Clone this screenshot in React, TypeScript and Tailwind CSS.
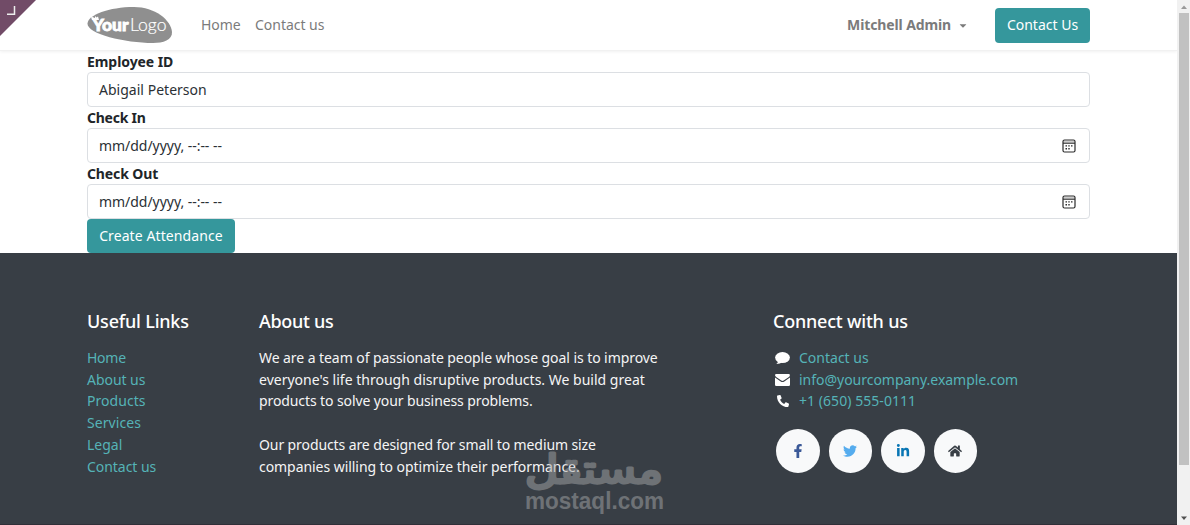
import { FaCaretDown, FaFacebookF, FaHome, FaLinkedinIn, FaPhone, FaTwitter } from "react-icons/fa";

const links: [string, string][] = [
  ["Home", "tracking-[-0.25px]"],
  ["About us", "tracking-[-0.05px]"],
  ["Products", "tracking-[0.05px]"],
  ["Services", "tracking-[0.07px]"],
  ["Legal", "tracking-[0px]"],
  ["Contact us", "tracking-[-0.05px]"],
];

function Logo() {
  return (
    <svg className="h-[38px] w-[86px]" viewBox="0 0 86 38">
      <path d="M0.500 17.500C1 9 22 1 47 1C68 1 84 14 85 26C85.500 34 76 37 66 37C38 37 0 28 0.500 17.500Z" fill="#8f8f8f" />
      <path d="M4 10.500L8 12V10L9.500 11.500L11 10.500L12 14H5Z" fill="#fff" />
      <text x="5.500" y="24.500" fill="#fff" stroke="#fff" strokeWidth="0.800" fontFamily="Lato" fontWeight="900" fontSize="17" textLength="36" lengthAdjust="spacingAndGlyphs">Your</text>
      <text x="43" y="24.500" fill="#fff" stroke="#fff" strokeWidth="0.200" fontFamily="Lato" fontWeight="300" fontSize="17" textLength="36.500" lengthAdjust="spacingAndGlyphs">Logo</text>
    </svg>
  );
}

function CalendarIcon() {
  return (
    <svg className="h-[14px] w-[14px]" viewBox="0 0 14 14" fill="none">
      <path d="M1.600 1.700H12.400V3.600H1.600Z" fill="#ccc" />
      <rect x="1" y="1" width="12" height="12" rx="1.500" stroke="#2b2b2b" strokeWidth="1.200" />
      <path d="M1 4.200H13" stroke="#2b2b2b" strokeWidth="1.100" />
      <path d="M3.500 6.900H5M6.300 6.900H7.700M9 6.900H10.500M3.500 9.700H5M6.300 9.700H7.700" stroke="#2b2b2b" strokeWidth="1.400" />
    </svg>
  );
}

function CommentIcon() {
  return (
    <svg className="mr-[9px] ml-[2px] h-[15px] w-[15px]" viewBox="0 0 15 15" fill="#fff">
      <ellipse cx="7.500" cy="7.600" rx="7.400" ry="5.500" />
      <path d="M3.300 10.500C3.300 12 2.300 13.200 1.300 14C4 14 6 13.300 7.500 11.500Z" />
    </svg>
  );
}

function EnvelopeIcon() {
  return (
    <svg className="mr-[9px] ml-[2px] h-[15px] w-[15px]" viewBox="0 0 15 15" fill="#fff">
      <path d="M1.300 2H13.700Q15 2 14.900 3.200Q14.700 4.500 13.500 5.300L8.700 8.600Q7.500 9.400 6.300 8.600L1.500 5.300Q0.200 4.400 0 3.200Q0 2 1.300 2Z" />
      <path d="M0 5.400L5.700 9.500Q7.500 10.600 9.300 9.500L15 5.400V12.700Q15 14 13.700 14H1.300Q0 14 0 12.700Z" />
    </svg>
  );
}

function Field({ label, value, date, tracking }: { label: string; value: string; date?: boolean; tracking: string }) {
  return (
    <div className="h-14">
      <div className="h-[21px] leading-[21px] font-bold text-[#212529]">
        <span className={tracking}>{label}</span>
      </div>
      <div className="flex h-[35px] items-center justify-between rounded-[4px] border border-[#dcdfe3] pr-[13px] pl-[11px] text-[#2b3035]">
        <span className={date ? "tracking-[-0.04px]" : "tracking-[0.02px]"}>{value}</span>
        {date && <CalendarIcon />}
      </div>
    </div>
  );
}

export default function App() {
  return (
    <div className="relative flex h-[525px] w-[1190px] overflow-hidden bg-white font-['Noto_Sans',sans-serif] text-[14px] leading-[21.700px] whitespace-nowrap">
      <div className="flex w-[1177px] flex-col">
        <header className="flex h-[51px] shrink-0 items-center border-b border-[#f1f1f1] pr-[87px] pl-[87px] text-[#7b7b7b] shadow-[0_1px_3px_rgba(0,0,0,0.06)]">
          <Logo />
          <span className="ml-[28px] w-[54px] tracking-[-0.050px]">Home</span>
          <span className="tracking-[-0.030px]">Contact us</span>
          <span className="ml-auto font-bold tracking-[-0.120px]">Mitchell Admin</span>
          <FaCaretDown className="mr-[27px] ml-[7px] h-[11px] w-[10px]" />
          <button className="h-[35px] w-[95px] rounded-[4px] bg-[#35979c] text-white">Contact Us</button>
        </header>
        <main className="h-[202px] shrink-0 px-[87px]">
          <Field label="Employee ID" value="Abigail Peterson" tracking="tracking-[-0.07px]" />
          <Field label="Check In" value="mm/dd/yyyy, --:-- --" date tracking="tracking-[-0.25px]" />
          <Field label="Check Out" value="mm/dd/yyyy, --:-- --" date tracking="tracking-[-0.12px]" />
          <button className="h-[34px] w-[148px] rounded-[4px] bg-[#35979c] tracking-[0.1px] text-white">Create Attendance</button>
        </main>
        <footer className="flex grow border-b border-[#302f38] bg-[#383e45] px-[87px] pt-[55px] text-[#f5f5f5]">
          <section className="w-[172px]">
            <h5 className="mb-[13px] h-[26px] text-[18px] leading-[26px] font-medium tracking-[-0.200px] text-white">Useful Links</h5>
            <ul className="text-[#55b3b7]">
              {links.map(([name, tracking]) => (
                <li key={name} className={tracking}>{name}</li>
              ))}
            </ul>
          </section>
          <section className="w-[514px]">
            <h5 className="mb-[13px] h-[26px] text-[18px] leading-[26px] font-medium tracking-[-0.300px] text-white">About us</h5>
            <p><span className="tracking-[-0.067px]">We are a team of passionate people whose goal is to improve</span><br />
              <span className="tracking-[0.010px]">everyone's life through disruptive products. We build great</span><br />
              <span className="tracking-[-0.100px]">products to solve your business problems.</span></p>
            <p className="mt-[21.700px]"><span className="tracking-[-0.100px]">Our products are designed for small to medium size</span><br />
              <span className="tracking-[-0.055px]">companies willing to optimize their performance.</span></p>
          </section>
          <section>
            <h5 className="mb-[13px] h-[26px] text-[18px] leading-[26px] font-medium tracking-[-0.220px] text-white">Connect with us</h5>
            <ul className="text-[#55b3b7]">
              <li className="flex items-center"><CommentIcon /><span className="tracking-[0px]">Contact us</span></li>
              <li className="flex items-center"><EnvelopeIcon /><span className="tracking-[-0.020px]">info@yourcompany.example.com</span></li>
              <li className="flex items-center"><FaPhone className="mr-[10px] ml-[4px] h-[12px] w-[12px] scale-x-[-1] text-white" /><span className="tracking-[0.050px]">+1 (650) 555-0111</span></li>
            </ul>
            <div className="mt-[17px] ml-[3px] flex gap-[9px]">
              <span className="flex size-[43.500px] items-center justify-center rounded-full bg-[#f8f9fa]"><FaFacebookF className="size-[14px] text-[#3b5998]" /></span>
              <span className="flex size-[43.500px] items-center justify-center rounded-full bg-[#f8f9fa]"><FaTwitter className="size-[14px] text-[#55acee]" /></span>
              <span className="flex size-[43.500px] items-center justify-center rounded-full bg-[#f8f9fa]"><FaLinkedinIn className="size-[14px] text-[#0976b4]" /></span>
              <span className="flex size-[43.500px] items-center justify-center rounded-full bg-[#f8f9fa]"><FaHome className="size-[14px] text-[#383e45]" /></span>
            </div>
          </section>
        </footer>
      </div>
      <aside className="flex w-[13px] flex-col items-center bg-[#f1f1f1]">
        <svg className="h-[13px] w-[10px]" viewBox="0 0 10 13"><path d="M2 9L5 5.500L8 9Z" fill="#999" /></svg>
        <div className="h-[452px] w-[10px] bg-[#c1c1c1]" />
        <svg className="mt-auto h-[13px] w-[10px]" viewBox="0 0 10 13"><path d="M2 4.500L5 8L8 4.500Z" fill="#505050" /></svg>
      </aside>
      <svg className="absolute top-0 left-0 h-[36px] w-[36px]" viewBox="0 0 36 36">
        <path d="M0 0H36L0 36Z" fill="#714b67" />
        <path d="M7 14.300H14.500V6" stroke="#eee" strokeWidth="1.500" fill="none" />
      </svg>
      <svg className="absolute top-[445px] left-[520px] h-[80px] w-[150px]" viewBox="0 0 150 80" fill="#a5a6a8" opacity="0.5">
        <text transform="translate(143 37.500) scale(1 1.080)" direction="rtl" fontFamily="DejaVu Sans" fontWeight="400" fontSize="36" stroke="#a5a6a8" strokeWidth="2.600" strokeLinejoin="round" textLength="138" lengthAdjust="spacingAndGlyphs">مستقل</text>
        <text x="5" y="64" fontFamily="Liberation Sans" fontWeight="700" fontSize="23" textLength="139" lengthAdjust="spacingAndGlyphs">mostaql.com</text>
      </svg>
    </div>
  );
}
